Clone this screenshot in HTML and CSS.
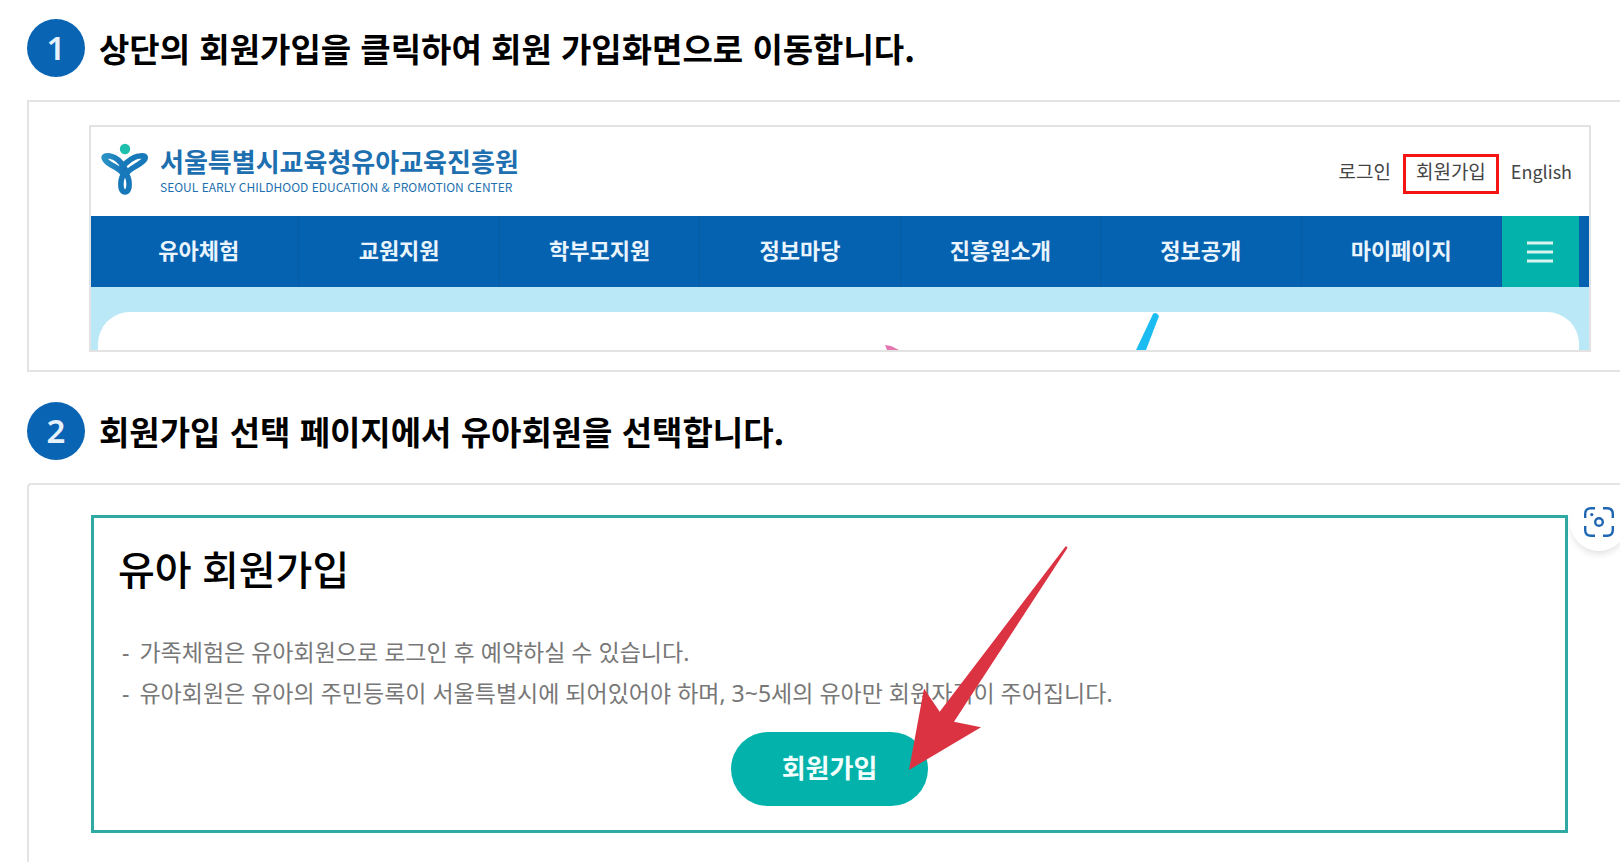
FILE: index.html
```html
<!DOCTYPE html>
<html lang="ko">
<head>
<meta charset="utf-8">
<meta name="viewport" content="width=device-width, initial-scale=1">
<title>회원가입 안내</title>
<link rel="stylesheet" href="styles.css">
</head>
<body>
<main class="guide">
  <section class="step">
    <h2 class="step-title"><span class="step-number">1</span>상단의 회원가입을 클릭하여 회원 가입화면으로 이동합니다.</h2>
    <div class="frame frame-site">
      <div class="site">
        <header class="site-header">
          <a class="logo" href="#">
            <svg class="logo-mark" viewBox="0 0 48 52" aria-hidden="true">
              <defs>
                <linearGradient id="wing" x1="0" y1="0" x2="1" y2="0">
                  <stop offset="0" stop-color="#2a93c4"/>
                  <stop offset="1" stop-color="#1672b8"/>
                </linearGradient>
              </defs>
              <circle cx="24" cy="6" r="5.2" fill="#1fbfae"/>
              <g fill="none" stroke="#1879ba" stroke-width="5.6" stroke-linecap="round" stroke-linejoin="round">
                <path stroke="url(#wing)" d="M22 31C19 25 12 24 6 19C1 14 3 12 9 13C14 14 20 18 24 26"/>
                <path d="M21 23C26 21 30 13 39 13C45 12 46 15 41 19C35 24 29 25 25 31"/>
                <path d="M24 30C19 34 18 49 24 49C30 49 29 34 24 30Z"/>
              </g>
            </svg>
            <span class="logo-text">
              <span class="logo-name">서울특별시교육청유아교육진흥원</span>
              <span class="logo-sub">SEOUL EARLY CHILDHOOD EDUCATION &amp; PROMOTION CENTER</span>
            </span>
          </a>
          <div class="site-links">
            <a href="#">로그인</a>
            <a class="highlighted" href="#">회원가입</a>
            <a class="latin" href="#">English</a>
          </div>
        </header>
        <nav class="site-nav">
          <a href="#">유아체험</a>
          <a href="#">교원지원</a>
          <a href="#">학부모지원</a>
          <a href="#">정보마당</a>
          <a href="#">진흥원소개</a>
          <a href="#">정보공개</a>
          <a href="#">마이페이지</a>
          <button class="menu-button" type="button" aria-label="전체메뉴">
            <svg width="26" height="22" viewBox="0 0 26 22" aria-hidden="true"><path d="M0 2H26M0 11H26M0 20H26" stroke="#d8f5f2" stroke-width="3"/></svg>
          </button>
        </nav>
        <div class="hero">
          <div class="hero-panel">
            <svg class="hero-art" viewBox="0 0 270 38" aria-hidden="true">
              <path d="M0 33L6 34L14 38H2Z" fill="#e676b0"/>
              <path d="M251 38L268 2Q271-1 274 4L261 38Z" fill="#1bbcf2"/>
            </svg>
          </div>
        </div>
      </div>
    </div>
  </section>

  <section class="step step-last">
    <h2 class="step-title"><span class="step-number">2</span>회원가입 선택 페이지에서 유아회원을 선택합니다.</h2>
    <div class="frame frame-join">
      <div class="join">
        <h3 class="join-title">유아 회원가입</h3>
        <ul class="join-notes">
          <li><span>-</span><span>가족체험은 유아회원으로 로그인 후 예약하실 수 있습니다.</span></li>
          <li><span>-</span><span>유아회원은 유아의 주민등록이 서울특별시에 되어있어야 하며, 3~5세의 유아만 회원자격이 주어집니다.</span></li>
        </ul>
        <div class="join-action">
          <button class="join-button" type="button">회원가입</button>
          <svg class="arrow" width="160" height="226" viewBox="0 0 160 226" aria-hidden="true">
            <path d="M1 225L16 143.500L31.700 166.700L157.500 1.500Q159.500 1 159.400 3L46 176.700L73 182.300Z" fill="#dc3343"/>
          </svg>
        </div>
      </div>
      <button class="lens-button" type="button" aria-label="이미지 검색">
        <svg width="30" height="30" viewBox="0 0 30 30" fill="none" stroke="#1f66b2" stroke-width="2.4" aria-hidden="true">
          <path d="M1.2 11V7Q1.200 1.200 7 1.200H11M19 1.200H23Q28.800 1.200 28.800 7V11M28.800 19V23Q28.800 28.800 23 28.800H19M11 28.800H7Q1.200 28.800 1.200 23V19"/>
          <circle cx="15" cy="15" r="3.8"/>
          <circle cx="7.8" cy="7.6" r="1.6" fill="#1f66b2" stroke="none"/>
        </svg>
      </button>
    </div>
  </section>
</main>
</body>
</html>
```
FILE: styles.css
```css
* {
  box-sizing: border-box;
}

body {
  margin: 0;
  background: #fff;
  color: #000;
  font-family: "Noto Sans CJK KR", sans-serif;
  overflow-x: hidden;
}

a {
  color: inherit;
  text-decoration: none;
}

button {
  border: 0;
  padding: 0;
  font-family: inherit;
  cursor: pointer;
}

.guide {
  display: flex;
  flex-direction: column;
  gap: 30px;
  min-height: 100vh;
  padding: 19px 0 0 27px;
}

.step {
  display: flex;
  flex-direction: column;
  gap: 23px;
}

.step-last {
  flex: 1;
}

.step-title {
  display: flex;
  align-items: center;
  gap: 14px;
  margin: 0;
  font-size: 33px;
  line-height: 58px;
  font-weight: 700;
}

.step-number {
  flex: none;
  width: 58px;
  height: 58px;
  border-radius: 50%;
  background: #0964b4;
  color: #e6f1fb;
  font-family: "Noto Sans", sans-serif;
  font-weight: 600;
  text-align: center;
}

.frame {
  position: relative;
  border: 2px solid #e4e4e4;
  border-right: 0;
}

.frame-site {
  padding: 23px 29px 18px 60px;
}

.site {
  border: 2px solid #e3e3e3;
}

.site-header {
  display: flex;
  align-items: center;
  justify-content: space-between;
  height: 89px;
  padding: 4px 17px 0 10px;
}

.logo {
  display: flex;
  align-items: center;
  gap: 11px;
  padding-bottom: 10px;
  color: #1d6fb0;
}

.logo-mark {
  width: 48px;
  height: 52px;
}

.logo-text {
  display: flex;
  flex-direction: column;
}

.logo-name {
  font-size: 26px;
  line-height: 36px;
  font-weight: 700;
}

.logo-sub {
  font-size: 12px;
  line-height: 16px;
}

.site-links {
  display: flex;
  align-items: center;
  gap: 12px;
  color: #444;
  font-size: 19px;
  line-height: 28px;
}

.site-links a {
  padding-bottom: 6px;
}

.site-links .latin {
  font-size: 18px;
}

.site-links .highlighted {
  padding: 0 10px 6px;
  border: 3px solid #f51414;
}

.site-nav {
  display: flex;
  height: 71px;
  padding: 0 10px 0 8px;
  background: #0562b1;
  color: #e9f4fd;
  font-size: 22px;
  line-height: 67px;
  font-weight: 700;
  text-align: center;
}

.site-nav a {
  flex: 1;
  border-right: 1px solid #0a59a3;
}

.menu-button {
  display: grid;
  place-items: center;
  width: 77px;
  background: #03b3ab;
}

.hero {
  height: 63px;
  padding: 25px 10px 0 7px;
  background: #bae8f6;
}

.hero-panel {
  display: flex;
  justify-content: flex-end;
  height: 100%;
  padding-right: 424px;
  border-radius: 32px 32px 0 0;
  background: #fff;
}

.hero-art {
  width: 270px;
  height: 38px;
  overflow: visible;
}

.frame-join {
  flex: 1;
  padding: 30px 52px 28px 62px;
  border-bottom: 0;
  border-top-left-radius: 4px;
}

.join {
  padding: 24px;
  border: 3px solid #2fa9a3;
  font-family: "Noto Sans", "Noto Sans CJK KR", sans-serif;
}

.join-title {
  margin: 0 0 34px;
  font-size: 40px;
  line-height: 56px;
  font-weight: 500;
}

.join-notes {
  margin: 0 0 18px;
  padding: 0 4px;
  list-style: none;
  color: #777;
  font-size: 23px;
  line-height: 41px;
}

.join-notes li {
  display: flex;
  gap: 10px;
}

.join-action {
  position: relative;
  width: 197px;
  margin: 0 auto;
}

.join-button {
  display: block;
  width: 100%;
  height: 74px;
  padding-bottom: 4px;
  border-radius: 37px;
  background: #03b3ab;
  color: #f2fffd;
  font-size: 26px;
  font-weight: 700;
}

.arrow {
  position: absolute;
  left: 177px;
  bottom: 35px;
}

.lens-button {
  position: absolute;
  top: 8px;
  right: -8px;
  display: grid;
  place-items: center;
  width: 58px;
  height: 58px;
  border-radius: 50%;
  background: #fff;
  box-shadow: 0 5px 7px -2px rgba(0, 0, 0, 0.12);
}
```
